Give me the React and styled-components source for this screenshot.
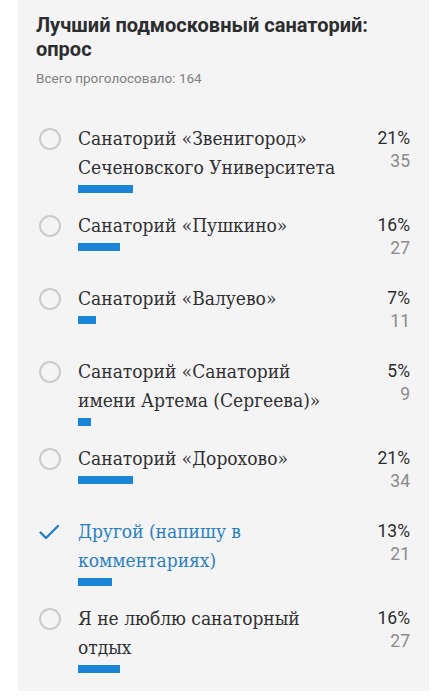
import React from "react";
import styled, { createGlobalStyle } from "styled-components";

const Global = createGlobalStyle`
  html, body { margin: 0; padding: 0; background: #ffffff; }
  body { font-family: Roboto, "Noto Sans", sans-serif; }
`;

const Card = styled.div`
  margin-left: 18px;
  width: 411px;
  box-sizing: border-box;
  background: #f4f4f4;
  padding: 13px 19px 0 18px;
`;

const Title = styled.h1`
  margin: 0;
  font-family: Roboto, "Noto Sans", sans-serif;
  font-weight: 700;
  font-size: 20px;
  line-height: 24px;
  color: #2c2d2e;
`;

const Subtitle = styled.div`
  margin-top: 8px;
  font-size: 13.5px;
  line-height: 18px;
  color: #818181;
`;

const List = styled.div`
  margin-top: 37px;
  display: flex;
  flex-direction: column;
`;

const Row = styled.div`
  display: flex;
  align-items: flex-start;
  padding-bottom: 18px;
`;

const IconCell = styled.div`
  width: 42px;
  flex: none;
  height: 29px;
  display: flex;
  align-items: center;
`;

const Circle = styled.span`
  display: block;
  margin-left: 3px;
  width: 18px;
  height: 18px;
  border: 2px solid #c9cbcd;
  border-radius: 50%;
`;

const Body = styled.div`
  width: 262px;
  flex: none;
`;

const Label = styled.div`
  font-family: "DejaVu Serif Condensed", "DejaVu Serif", "Liberation Serif", serif;
  font-stretch: condensed;
  font-size: 19px;
  line-height: 29px;
  color: ${(p) => (p.$voted ? "#2b7fc1" : "#2f3031")};
`;

const Bar = styled.div`
  margin-top: 3px;
  height: 8px;
  background: #1a85d6;
`;

const Stats = styled.div`
  flex: 1;
  text-align: right;
  padding-bottom: 9px;
`;

const Percent = styled.div`
  font-size: 17.5px;
  line-height: 29px;
  color: #2c2d2e;
`;

const Count = styled.div`
  font-size: 17.5px;
  line-height: 17px;
  color: #8a8a8a;
`;

const Check = () => (
  <svg width="22" height="18" viewBox="0 0 22 18" style={{ marginLeft: 2 }}>
    <path d="M2.5 9.5 L8 15 L20 3" fill="none" stroke="#2b7fc1" strokeWidth="2.4" strokeLinecap="round" strokeLinejoin="round" />
  </svg>
);

const options = [
  { label: "Санаторий «Звенигород» Сеченовского Университета", pct: 21, count: 35 },
  { label: "Санаторий «Пушкино»", pct: 16, count: 27 },
  { label: "Санаторий «Валуево»", pct: 7, count: 11 },
  { label: "Санаторий «Санаторий имени Артема (Сергеева)»", pct: 5, count: 9 },
  { label: "Санаторий «Дорохово»", pct: 21, count: 34 },
  { label: "Другой (напишу в комментариях)", pct: 13, count: 21, voted: true },
  { label: "Я не люблю санаторный отдых", pct: 16, count: 27 },
];

export default function App() {
  return (
    <>
      <Global />
      <Card>
        <Title>Лучший подмосковный санаторий: опрос</Title>
        <Subtitle>Всего проголосовало: 164</Subtitle>
        <List>
          {options.map((o, i) => (
            <Row key={i}>
              <IconCell>{o.voted ? <Check /> : <Circle />}</IconCell>
              <Body>
                <Label $voted={o.voted}>{o.label}</Label>
                <Bar style={{ width: `${o.pct}%` }} />
              </Body>
              <Stats>
                <Percent>{o.pct}%</Percent>
                <Count>{o.count}</Count>
              </Stats>
            </Row>
          ))}
        </List>
      </Card>
    </>
  );
}
